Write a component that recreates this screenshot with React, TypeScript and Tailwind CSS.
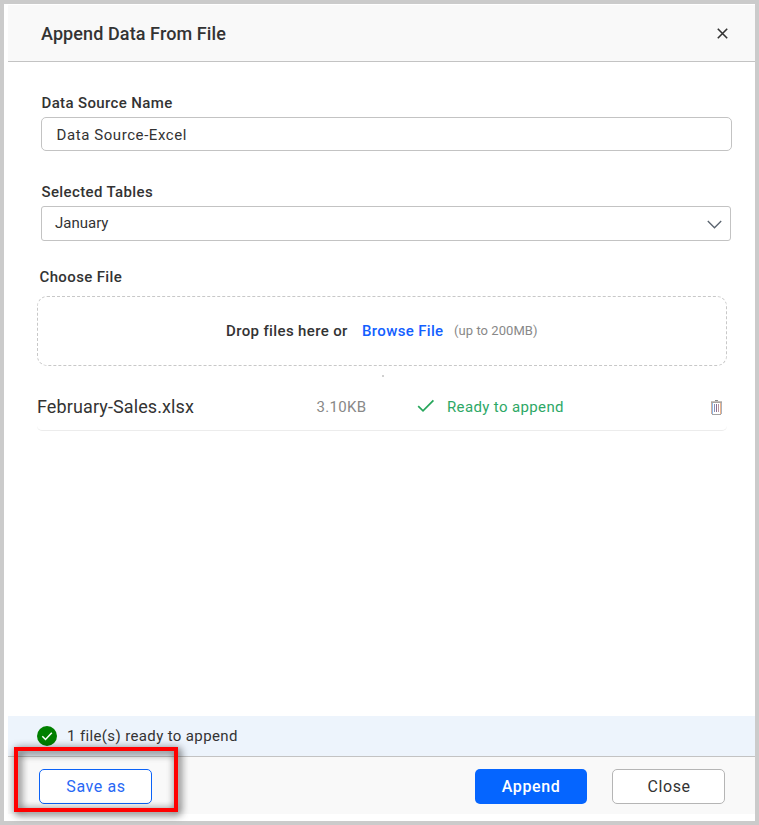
import React from "react";

const label = "block whitespace-nowrap text-[15px] leading-[20px] font-medium tracking-[0.37px] text-[#333] pl-[0.5px]";

function CheckIcon() {
  return (
    <svg className="-mt-px" width="18" height="14" viewBox="0 0 18 14" fill="none" stroke="#26a65b" strokeWidth="1.7">
      <path d="M1.2 7.2 6 11.9 16.4 1.3" />
    </svg>
  );
}

function TrashIcon() {
  return (
    <svg className="mt-[2px]" width="11" height="15" viewBox="0 0 11 15" fill="none">
      <path d="M4 .5h3" stroke="#8c8c8c" />
      <path d="M0 1.5h11" stroke="#c4bfbb" />
      <path d="M0 2.5h11" stroke="#aaa5a2" />
      <path d="M.5 3v11" stroke="#d3b09c" />
      <path d="M1.5 3v11" stroke="#8fb9e8" />
      <path d="M10.5 3v11" stroke="#a9b1c0" />
      <path d="M9.5 3v11" stroke="#edb48a" />
      <path d="M1 14.5h9" stroke="#a3a3a3" />
      <path d="M3.5 4v8" stroke="#8891b5" />
      <path d="M5.5 4v8" stroke="#8b6e91" />
      <path d="M7.5 4v8" stroke="#b995a0" />
    </svg>
  );
}

export default function App() {
  return (
    <div className="relative flex h-[825px] w-[759px] flex-col border-4 border-[#cbcbcb] bg-white pt-px pb-[7px] pl-1 font-['Roboto',sans-serif] text-[#333]">
      <header className="flex h-[57px] items-center justify-between border-b border-[#c3c3c3] bg-[#f9f9f9] pr-[27px] pl-[33px]">
        <h1 className="mt-[2px] whitespace-nowrap text-[18px] leading-6 font-medium tracking-[0.1px]">Append Data From File</h1>
        <button aria-label="Close dialog">
          <svg width="11" height="11" viewBox="0 0 11 11" fill="none" stroke="#333" strokeWidth="1.6">
            <path d="m.8 .8 9.4 9.4M10.2 .8 .8 10.2" />
          </svg>
        </button>
      </header>

      <main className="flex-1 pt-[31px] pl-[29px]">
        <section className="ml-1">
          <label className={label}>Data Source Name</label>
          <div className="mt-1 flex h-[34px] w-[691px] items-center rounded-[5px] border border-[#c3c3c3] pt-[2px] pl-[14.5px] text-[15px] tracking-[0.58px]">
            Data Source-Excel
          </div>
        </section>

        <section className="mt-[31px] ml-1">
          <label className={label}>Selected Tables</label>
          <div className="mt-1 flex h-[35px] w-[690px] items-center justify-between rounded-[3px] border border-[#c3c3c3] pr-2 pl-[13px] text-[15px]">
            <span className="-mt-px">January</span>
            <svg className="mt-px" width="15" height="9" viewBox="0 0 15 9" fill="none" stroke="#59636e" strokeWidth="1.3">
              <path d="M.8 1 7.5 7.8 14.2 1" />
            </svg>
          </div>
        </section>

        <section className="mt-[26px]">
          <label className={label + " ml-[2px]"}>Choose File</label>
          <div className="mt-[9px] flex h-[70px] w-[690px] items-center rounded-[10px] border border-dashed border-[#c8c8c8] pl-[188px] whitespace-nowrap">
            <span className="w-[136px] text-[15px] font-medium tracking-[0.37px]">Drop files here or</span>
            <span className="w-[92px] text-[15px] font-medium tracking-[0.35px] text-[#1360ff]">Browse File</span>
            <span className="text-[13px] tracking-[0.06px] text-[#888]">(up to 200MB)</span>
          </div>
          <div className="mt-[9px] ml-[345px] h-[2px] w-[2px] bg-[#d0d0d0]" />
          <div className="mt-[6px] flex h-[48px] w-[690px] items-center rounded-b-[5px] border-b border-[#ececec] pr-[5px] whitespace-nowrap">
            <span className="w-[279px] text-[18px] tracking-[0.11px]">February-Sales.xlsx</span>
            <span className="mt-[2px] w-[101px] pl-[0.5px] text-[15px] tracking-[0.3px] text-[#888]">3.10KB</span>
            <CheckIcon />
            <span className="mt-[2px] ml-[12px] flex-1 text-[15px] tracking-[0.37px] text-[#2da866]">Ready to append</span>
            <TrashIcon />
          </div>
        </section>
      </main>

      <div className="flex h-[40px] items-center bg-[#edf4fc] pl-[29px]">
        <svg width="20" height="20" viewBox="0 0 20 20">
          <circle cx="10" cy="10" r="10" fill="#008000" />
          <path d="m5.3 10.3 3.2 3.2 6.3-6.7" fill="none" stroke="#fff" strokeWidth="1.5" />
        </svg>
        <span className="ml-[10px] whitespace-nowrap text-[15px] tracking-[0.37px]">1 file(s) ready to append</span>
      </div>

      <footer className="flex h-[58px] items-start border-t border-[#c3c3c3] bg-[#f9f9f9] pt-3 pl-[31px] text-[16px] tracking-[0.6px]">
        <button className="h-[35px] w-[113px] rounded-[5px] border border-[#0b62f7] bg-white pt-px pl-px text-[#2868f5]">Save as</button>
        <button className="ml-[323px] h-[35px] w-[112px] rounded-[5px] bg-[#0565ff] pt-px font-medium text-white">Append</button>
        <button className="ml-[25px] h-[35px] w-[113px] rounded-[5px] border border-[#b5b5b5] bg-white pt-px pl-px">Close</button>
      </footer>

      <div className="pointer-events-none absolute top-[743px] left-[10px] h-[65px] w-[164px] border-4 border-[#ff0000] drop-shadow-[2px_2px_4px_rgba(0,0,0,0.85)]" />
    </div>
  );
}
